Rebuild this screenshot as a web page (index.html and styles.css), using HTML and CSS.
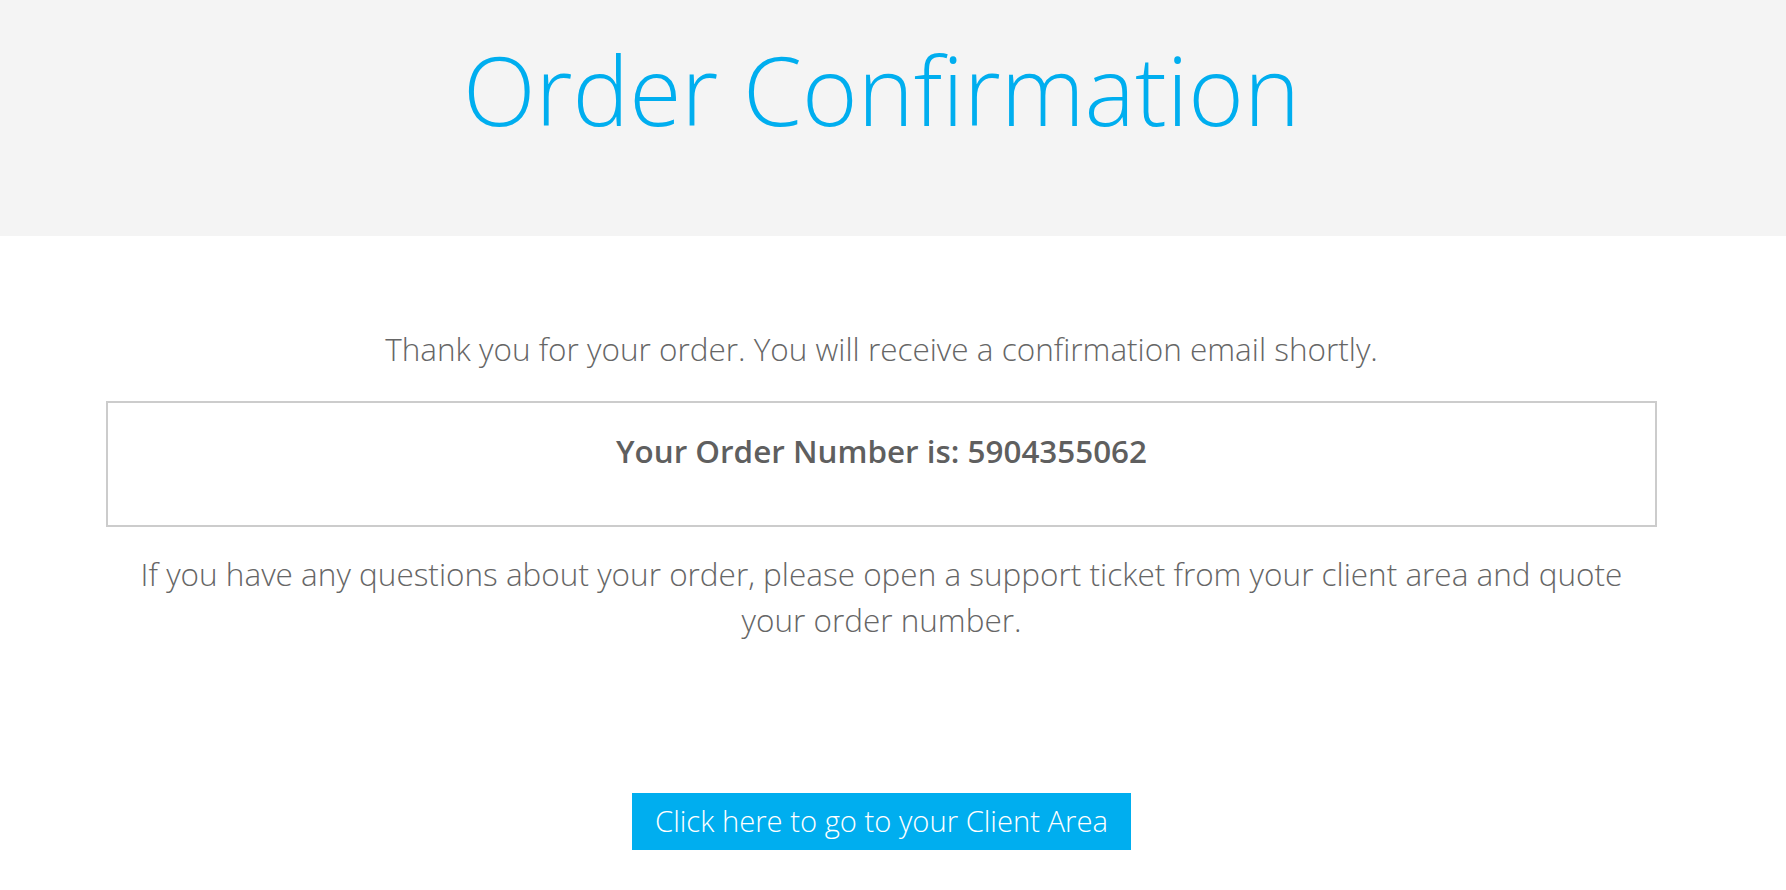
FILE: index.html
```html
<!DOCTYPE html>
<html lang="en">
<head>
    <meta charset="UTF-8">
    <meta name="viewport" content="width=device-width, initial-scale=1.0">
    <title>Order Confirmation</title>
    <link rel="stylesheet" href="styles.css">
</head>
<body>
    <div class="header">
        <h1>Order Confirmation</h1>
    </div>

    <div class="container">
        <p class="intro">Thank you for your order. You will receive a confirmation email shortly.</p>

        <div class="order-box">
            <strong>Your Order Number is: 5904355062</strong>
        </div>

        <p class="note">If you have any questions about your order, please open a support ticket from your client area and quote your order number.</p>

        <div class="actions">
            <a href="#" class="btn">Click here to go to your Client Area</a>
        </div>
    </div>
</body>
</html>
```

FILE: styles.css
```css
body {
    font-family: "Open Sans", Arial, sans-serif;
    font-weight: 300;
    color: #666;
    background-color: #fff;
    margin: 0;
    padding: 0;
}
.header {
    background-color: #f4f4f4;
    height: 236px;
    padding-right: 23px;
    box-sizing: border-box;
}
.header h1 {
    margin: 0;
    padding-top: 21px;
    font-size: 95px;
    font-weight: 300;
    color: #00aeef;
    text-align: center;
    line-height: 136px;
}
.container {
    padding: 0 129px 40px 106px;
    text-align: center;
}
.intro {
    margin: 90px 0 0;
    font-size: 31.5px;
    line-height: 46px;
}
.order-box {
    margin-top: 29px;
    border: 2px solid #ccc;
    padding: 30px 0 56px;
    font-size: 31.4px;
    line-height: 36px;
}
.order-box strong {
    font-weight: 600;
    color: #5f5f5f;
}
.note {
    margin: 24px 0 0;
    font-size: 31.5px;
    line-height: 46px;
    padding: 0 20px;
}
.actions {
    margin-top: 150px;
}
.btn {
    display: inline-block;
    background-color: #00aeef;
    color: #fff;
    text-decoration: none;
    font-size: 29.2px;
    line-height: 57px;
    padding: 0 23px;
}
```
